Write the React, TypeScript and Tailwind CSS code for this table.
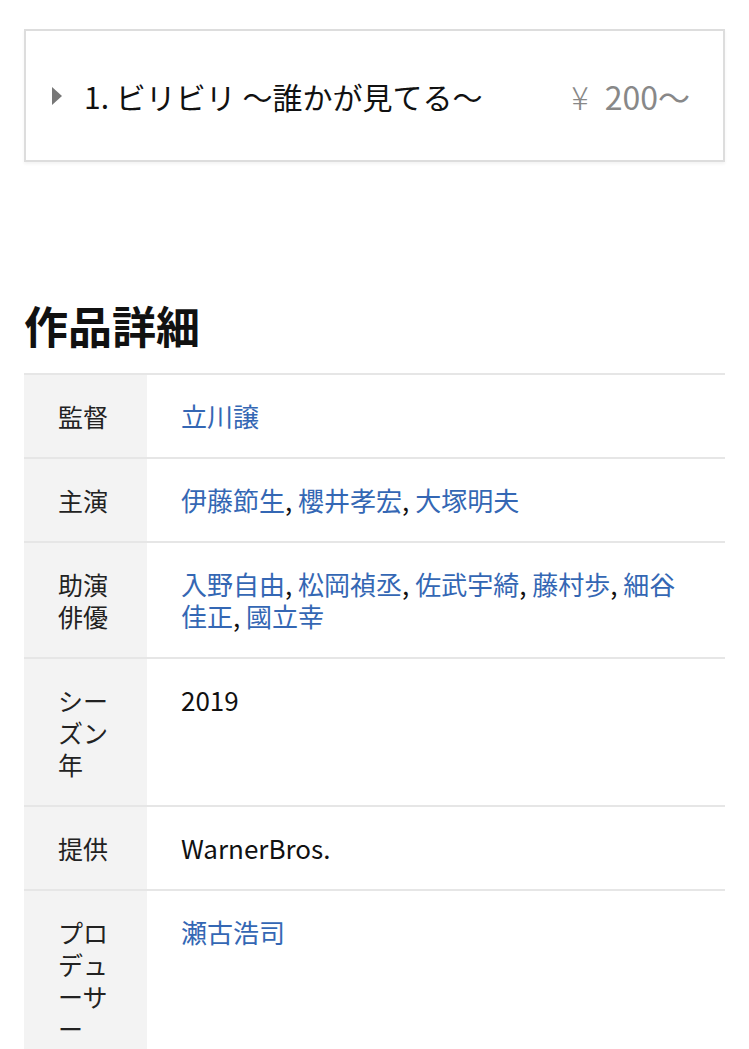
const font = '"Noto Sans CJK JP", "Noto Sans", sans-serif';

type Cell = { text: string; link?: boolean };

const rows: { label: string; values: Cell[] }[] = [
  { label: '監督', values: [{ text: '立川譲', link: true }] },
  {
    label: '主演',
    values: [
      { text: '伊藤節生', link: true },
      { text: '櫻井孝宏', link: true },
      { text: '大塚明夫', link: true },
    ],
  },
  {
    label: '助演俳優',
    values: [
      { text: '入野自由', link: true },
      { text: '松岡禎丞', link: true },
      { text: '佐武宇綺', link: true },
      { text: '藤村歩', link: true },
      { text: '細谷佳正', link: true },
      { text: '國立幸', link: true },
    ],
  },
  { label: 'シーズン年', values: [{ text: '2019' }] },
  { label: '提供', values: [{ text: 'WarnerBros.' }] },
  { label: 'プロデューサー', values: [{ text: '瀬古浩司', link: true }] },
];

function DetailRow({ label, values }: { label: string; values: Cell[] }) {
  return (
    <div className="flex border-t-2 border-[#e6e6e6]">
      <div className="w-[123px] shrink-0 bg-[#f3f3f3] px-[34px] py-[25px] text-[25px] leading-[32px] text-[#222]">
        {label}
      </div>
      <div className="flex-1 py-[25px] pl-[34px] pr-[33px] text-[26px] leading-[32px] text-[#111]">
        {values.map((v, i) => (
          <span key={i}>
            {v.link ? <a className="text-[#3467b4]">{v.text}</a> : v.text}
            {i < values.length - 1 && ', '}
          </span>
        ))}
      </div>
    </div>
  );
}

export default function App() {
  return (
    <div className="min-h-[1049px] bg-white px-[24px] pt-[29px]" style={{ fontFamily: font }}>
      {/* Episode card */}
      <div className="flex h-[133px] items-center border-2 border-[#dddddd] pl-[26px] pr-[33px] shadow-[0_2px_3px_rgba(0,0,0,0.05)]">
        <span className="mr-[22px] h-0 w-0 border-y-[9px] border-l-[10px] border-y-transparent border-l-[#777]" />
        <span className="flex-1 text-[30px] leading-none text-[#111]">1. ビリビリ ～誰かが見てる～</span>
        <span className="flex items-center text-[32px] leading-none text-[#888]">
          <span className="mr-[16px] text-[32px] font-light">¥</span>200～
        </span>
      </div>

      {/* Details */}
      <h2 className="mt-[133px] text-[44px] font-bold leading-[60px] text-[#111]">作品詳細</h2>
      <div className="mt-[18px]">
        {rows.map((r, i) => (
          <DetailRow key={i} label={r.label} values={r.values} />
        ))}
      </div>
    </div>
  );
}
